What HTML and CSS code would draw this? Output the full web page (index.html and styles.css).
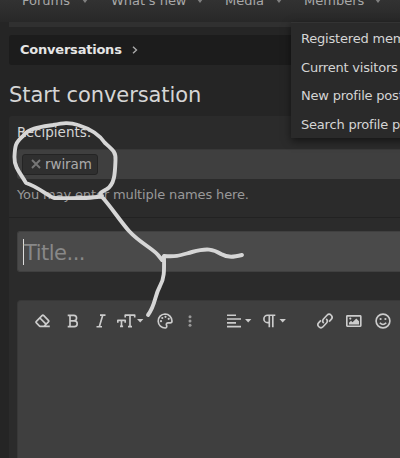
FILE: index.html
```html
<!DOCTYPE html>
<html lang="en">
<head>
<meta charset="utf-8">
<title>Start conversation</title>
<link rel="stylesheet" href="styles.css">
</head>
<body>
<div class="page">
  <nav class="nav">
    <span class="nav-item forums">Forums<i class="arrow"></i></span>
    <span class="nav-item news">What's new<i class="arrow"></i></span>
    <span class="nav-item media">Media<i class="arrow"></i></span>
    <span class="nav-item members">Members<i class="arrow"></i></span>
  </nav>
  <main class="content">
    <div class="subnav"></div>
    <div class="breadcrumb"><b>Conversations</b><svg width="6" height="8" viewBox="0 0 6 8"><path d="M1 .7 4.5 4 1 7.3"/></svg></div>
    <h1>Start conversation</h1>
    <section class="block">
      <div class="recipients">
        <label>Recipients:</label>
        <div class="token-input"><span class="token"><svg width="10" height="10" viewBox="0 0 10 10"><path d="m1 1 8 8M9 1 1 9"/></svg>rwiram</span></div>
        <p>You may enter multiple names here.</p>
      </div>
      <div class="compose">
        <div class="title-input"><i class="caret"></i><span>Title...</span></div>
        <div class="editor">
          <div class="toolbar">
            <svg class="icon eraser" width="16" height="14" viewBox="0 0 16 14"><path d="M4.8 12.3 1.4 8.9q-.8-.8 0-1.6l5.6-5.6q.9-.9 1.8 0l4.6 4.6q.8.8 0 1.6L9 12.3M4.9 4l6.1 6.1M4.6 12.3h10.2"/></svg>
            <svg class="icon bold" width="12" height="14" viewBox="0 0 12 14"><path d="M.7 1.3h6.1a2.7 2.7 0 0 1 0 5.5H3M.7 12.6h6.6a2.9 2.9 0 0 0 0-5.8M3 1.3v11.3"/></svg>
            <svg class="icon italic" width="10" height="14" viewBox="0 0 10 14"><path d="M4 1.1h5.5M.5 12.7H6M6.8 1.1 3.3 12.7"/></svg>
            <svg class="icon size" width="27" height="14" viewBox="0 0 27 14"><path d="M.8 8.8V6.4h7.4v2.4M4.5 6.4v6M3 12.4h3.1M8.2 3.4V1.1h9.5v2.3M13 1.1v11.5M11 12.6h4"/><path class="fill" d="M20 5h6.4l-3.2 3.5z"/></svg>
            <svg class="icon palette" width="16" height="16" viewBox="0 0 16 16"><path d="M8 1a7 7 0 1 0 .4 14c1.4-.3 1.7-1.5 1.1-2.8-.6-1.4.2-2.4 1.7-2.4h2c1.3 0 1.8-.7 1.8-1.8C14.8 4.2 12 1 8 1z"/><g class="fill"><circle cx="4" cy="8.2" r="1.1"/><circle cx="5.3" cy="5" r="1.1"/><circle cx="8.5" cy="3.8" r="1.1"/><circle cx="11.7" cy="5.8" r="1.1"/></g></svg>
            <svg class="icon more" width="4" height="12" viewBox="0 0 4 12"><g class="fill"><circle cx="2" cy="1.7" r="1.5"/><circle cx="2" cy="6" r="1.5"/><circle cx="2" cy="10.3" r="1.5"/></g></svg>
            <svg class="icon align" width="25" height="14" viewBox="0 0 25 14"><path d="M0 1.2h9M0 5h14M0 8.8h9M0 12.6h14"/><path class="fill" d="M18 5h6.4l-3.2 3.5z"/></svg>
            <svg class="icon para" width="24" height="14" viewBox="0 0 24 14"><path d="M12.3 1.2H4.6a3.7 3.7 0 0 0 0 7.4h1.7M6.3 1.2v12M9.8 1.2v12"/><path class="fill" d="M16.5 5h6.4l-3.2 3.5z"/></svg>
            <svg class="icon link" width="16" height="16" viewBox="0 0 16 16"><path d="M6.8 10.2A3.1 3.1 0 0 1 6.5 6L10 2.3a2.9 2.9 0 0 1 4.2 4.1l-2.1 2.2M9.2 5.8a3.1 3.1 0 0 1 .3 4.2L6 13.7a2.9 2.9 0 0 1-4.2-4.1l2.1-2.2"/></svg>
            <svg class="icon image" width="16" height="12" viewBox="0 0 16 12"><rect x=".8" y=".8" width="14" height="10.4" rx=".7"/><path class="fill" d="M3 9.5V7.7l2-2 1.5 1.5 3.8-3.8 2.7 2.8v3.3z"/><circle class="fill" cx="4.3" cy="3.6" r="1.1"/></svg>
            <svg class="icon smile" width="16" height="16" viewBox="0 0 16 16"><circle cx="8" cy="8" r="6.9"/><path d="M4.8 9.7q3.2 3.5 6.4 0"/><g class="fill"><circle cx="5.6" cy="6" r="1.1"/><circle cx="10.4" cy="6" r="1.1"/></g></svg>
          </div>
        </div>
      </div>
    </section>
  </main>
  <div class="menu">
    <span>Registered members</span><span>Current visitors</span><span>New profile posts</span><span>Search profile posts</span>
  </div>
  <svg class="drawing" width="400" height="458" viewBox="0 0 400 458">
    <path d="M102 196C91 199 70 198 54 198C47 196 39 187 26 183C22 175 14 168 14.5 157C15 146 15 143 23 136C29 128 40 127 53 125C63 123 69 122 78 125C91 129 99 134 105 143C113 150 116 152 115.5 160C115 172 115 184 107 189C101 192 97 194 103 198C111 207 121 222 129 231C140 243 152 248 158 255L162 260L164 256C178 257 181 255 192 252C207 248 213 249 221 254C228 258 234 257 242 255"/>
    <path d="M164 257C164 267 165 278 160 286C154 297 156 304 148 315"/>
  </svg>
</div>
</body>
</html>
```
FILE: styles.css
```css
* { box-sizing: border-box; }
body { margin: 0; background: #252525; font: 13px/18px "DejaVu Sans", sans-serif; color: #d5d5d5; }
.page { position: relative; width: 400px; height: 458px; overflow: hidden; }
.nav { height: 22px; display: flex; background: linear-gradient(#323232, #282828); color: #a8a8a8; white-space: nowrap; }
.nav-item { height: 18px; margin-top: -8px; display: flex; align-items: center; justify-content: space-between; }
.forums { margin-left: 22px; width: 66px; }
.news { margin-left: 23px; width: 92px; }
.media { margin-left: 22px; width: 57px; }
.members { margin-left: 22px; width: 77px; }
.arrow { border: 3.5px solid transparent; border-top: 4px solid #808080; border-bottom: 0; }
.content { padding-left: 9px; }
.subnav { height: 5px; background: #303030; }
.breadcrumb { height: 30px; margin-top: 8px; padding-left: 11px; background: #1c1c1c; border-radius: 3px; display: flex; align-items: center; gap: 10px; color: #e5e5e5; letter-spacing: -.22px; }
.breadcrumb svg { fill: none; stroke: #aaa; stroke-width: 1.4; }
h1 { height: 51px; margin: 0; font-size: 21px; line-height: 60px; font-weight: 400; letter-spacing: -.08px; white-space: nowrap; }
.block { height: 342px; background: #2b2b2b; border-radius: 3px 0 0; }
.recipients { height: 102px; padding: 7px 0 0 8px; border-bottom: 1px solid #222; }
.recipients label { display: block; height: 26px; font-size: 13.5px; }
.token-input { height: 30px; background: #3f3f3f; padding: 4px 5px; border-top: 1px solid #383838; border-radius: 3px 0 0 3px; }
.token { width: 76px; height: 21px; border: 1px solid #242424; border-radius: 3px; background: #2f2f2f; display: flex; align-items: center; padding: 0 0 1px 8px; gap: 4px; color: #aaa; font-size: 13.5px; letter-spacing: -.1px; }
.token svg { stroke: #777; stroke-width: 1.9; }
.recipients p { margin: 7px 0 0; color: #999; letter-spacing: -.13px; }
.compose { padding: 13px 0 0 8px; }
.title-input { height: 41px; background: #4a4a4a; border: 1px solid #404040; border-right: 0; border-radius: 3px 0 0 3px; display: flex; align-items: center; padding-left: 5px; color: #888; font-size: 21px; letter-spacing: -.5px; }
.title-input span { padding-top: 2px; }
.caret { width: 1px; height: 26px; background: #ddd; }
.editor { margin-top: 28px; height: 160px; background: #3f3f3f; border: 1px solid #383838; border-right: 0; border-radius: 4px 0 0; }
.toolbar { height: 40px; display: flex; align-items: center; padding-left: 17px; }
.icon { flex: none; fill: none; stroke: #ccc; stroke-width: 1.65; stroke-linejoin: round; }
.fill { fill: #ccc; stroke: none; }
.bold { margin-left: 16px; }
.italic { margin-left: 17px; }
.size { margin-left: 11px; }
.palette { margin-left: 13px; }
.more { margin-left: 15px; }
.more .fill { fill: #999; }
.align { margin-left: 35px; }
.para { margin-left: 11px; }
.link { margin-left: 30px; }
.image { margin-left: 13px; }
.smile { margin-left: 13px; }
.menu { position: absolute; left: 291px; top: 22px; width: 170px; height: 116px; padding: 2px 0 0 10px; background: #2a2a2a; border-top: 1px solid #333; box-shadow: 0 3px 8px #0008; letter-spacing: -.2px; white-space: nowrap; }
.menu span { display: block; height: 28.6px; line-height: 28px; }
.drawing { position: absolute; left: 0; top: 0; fill: none; stroke: #d6d6d6; stroke-width: 3.9; stroke-linecap: round; stroke-linejoin: round; pointer-events: none; }
```
